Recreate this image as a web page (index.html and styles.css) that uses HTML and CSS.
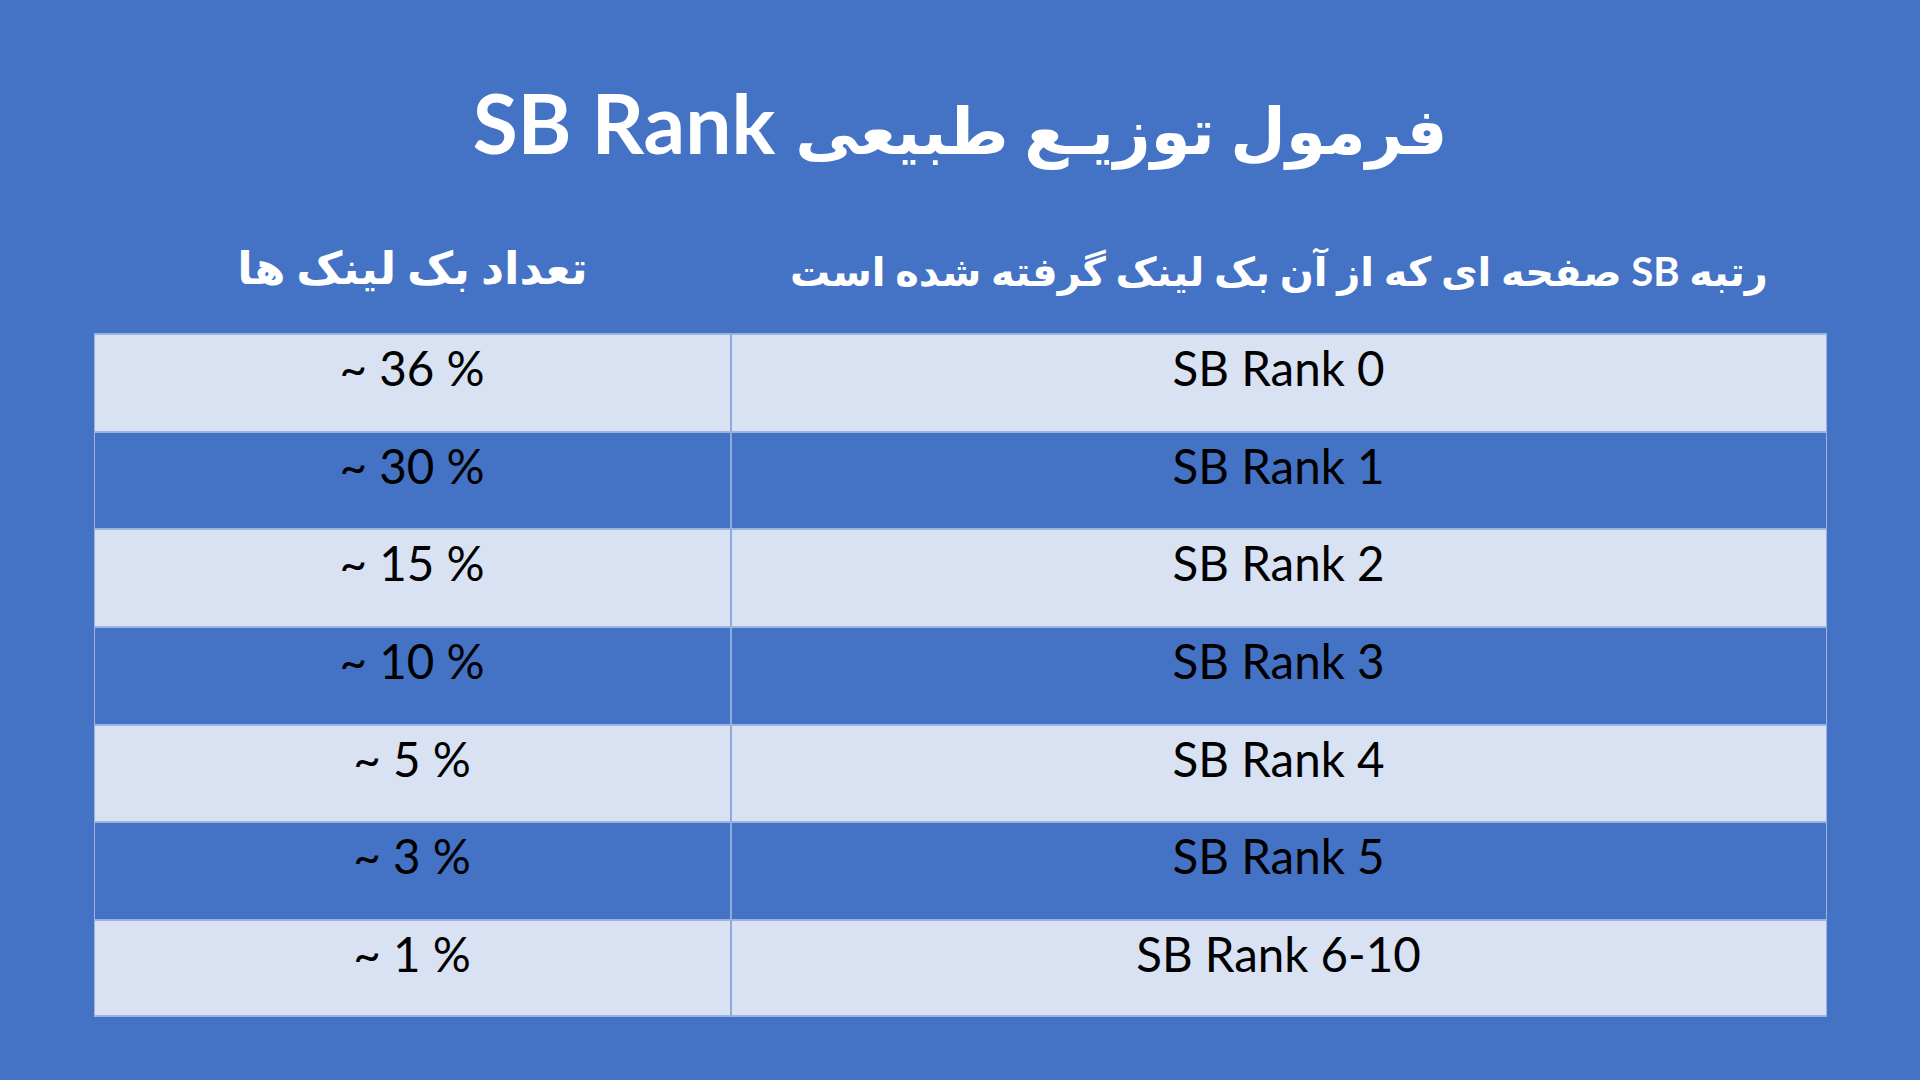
FILE: index.html
```html
<!DOCTYPE html>
<html lang="fa">
<head>
<meta charset="utf-8">
<title>فرمول توزیع طبیعی SB Rank</title>
<link rel="stylesheet" href="styles.css">
</head>
<body>
<div class="slide">
  <h1 class="title" dir="rtl"><span class="fa">فرمول توزیـع طبیعی</span> SB Rank</h1>
  <div class="table">
    <div class="head head-short" dir="rtl">تعداد بک لینک ها</div>
    <div class="head" dir="rtl">رتبه SB صفحه ای که از آن بک لینک گرفته شده است</div>

    <div class="cell light pct">~ 36 %</div>
    <div class="cell light">SB Rank 0</div>

    <div class="cell dark pct">~ 30 %</div>
    <div class="cell dark">SB Rank 1</div>

    <div class="cell light pct">~ 15 %</div>
    <div class="cell light">SB Rank 2</div>

    <div class="cell dark pct">~ 10 %</div>
    <div class="cell dark">SB Rank 3</div>

    <div class="cell light pct">~ 5 %</div>
    <div class="cell light">SB Rank 4</div>

    <div class="cell dark pct">~ 3 %</div>
    <div class="cell dark">SB Rank 5</div>

    <div class="cell light pct last">~ 1 %</div>
    <div class="cell light last">SB Rank 6-10</div>
  </div>
</div>
</body>
</html>
```

FILE: styles.css
```css
html, body {
  margin: 0;
  padding: 0;
}

body {
  background: #4472C4;
}

.slide {
  width: 1920px;
  height: 1080px;
  background: #4472C4;
  display: flex;
  flex-direction: column;
  align-items: center;
  box-sizing: border-box;
}

.title {
  margin: 72px 0 0 0;
  font-family: Lato, "DejaVu Sans", sans-serif;
  font-weight: 700;
  font-size: 82px;
  line-height: 100px;
  height: 100px;
  color: #ffffff;
  white-space: nowrap;
}

.title .fa {
  font-size: 64px;
  line-height: 1;
}

.table {
  margin-top: 64px;
  width: 1733px;
  display: grid;
  grid-template-columns: 638px 1095px;
  grid-template-rows: 97px repeat(7, 97.7px);
}

.head {
  font-family: Lato, "DejaVu Sans", sans-serif;
  font-weight: 700;
  font-size: 40px;
  line-height: 48px;
  color: #ffffff;
  text-align: center;
  padding-top: 11px;
  white-space: nowrap;
}

.head-short {
  font-size: 45px;
  padding-top: 7px;
}

.cell {
  font-family: Lato, "DejaVu Sans", sans-serif;
  font-size: 47.5px;
  line-height: 58px;
  color: #000000;
  text-align: center;
  padding-top: 4px;
  box-sizing: border-box;
  border-top: 2px solid #9CB3E0;
  border-right: 1px solid #9CB3E0;
}

.cell.pct {
  border-left: 1px solid #9CB3E0;
  border-right: 2px solid #8EAADB;
}

.cell.last {
  border-bottom: 2px solid #9CB3E0;
}

.light {
  background: #D9E2F3;
}

.dark {
  background: #4472C4;
}
```
